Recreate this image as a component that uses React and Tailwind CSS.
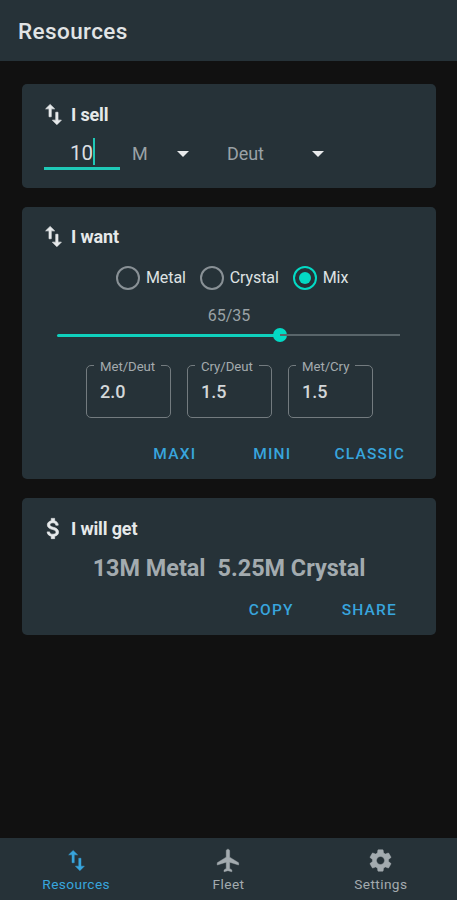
import { useState } from 'react'
import { MdSwapVert, MdAttachMoney, MdFlight, MdSettings } from 'react-icons/md'

const kinds = ['Metal', 'Crystal', 'Mix']

const tabs = [
  { name: 'Resources', Icon: MdSwapVert },
  { name: 'Fleet', Icon: MdFlight },
  { name: 'Settings', Icon: MdSettings },
]

function Card({ Icon, title, className, children }) {
  return (
    <section className={`rounded-[5px] bg-[#263238] ${className}`}>
      <h2 className="ml-[18px] flex h-[27px] items-center gap-[4px] text-[18px] font-bold tracking-[-0.15px] text-[#e6e9ea]">
        <Icon className="size-[27px] stroke-current stroke-[0.6] [&>path[fill=none]]:stroke-none" />
        {title}
      </h2>
      {children}
    </section>
  )
}

function Caret() {
  return (
    <svg viewBox="0 0 12 6" className="mt-[5px] h-[6px] w-[12px] fill-[#e8eaeb]">
      <path d="M0 0h12L6 6z" />
    </svg>
  )
}

function Rate({ label, value }) {
  return (
    <fieldset className="h-[60px] w-[85px] rounded-[5px] border-[1.5px] border-[#737b7f] pl-[7px]">
      <legend className="h-[14px] px-[6px] text-[13.2px] leading-[18px] tracking-[-0.05px] text-[#a4abae]">{label}</legend>
      <input defaultValue={value} className="mt-[7px] ml-[6px] block h-[24px] w-[56px] text-[18px] font-medium text-[#d3d7d9] outline-none" />
    </fieldset>
  )
}

export default function App() {
  const [kind, setKind] = useState('Mix')
  const [tab, setTab] = useState('Resources')
  const share = 65

  return (
    <div className="flex h-[900px] w-[457px] flex-col bg-[#111111] font-['Roboto',sans-serif]">
      <header className="flex h-[61px] items-center bg-[#263238] pt-[2px] pl-[18px]">
        <h1 className="text-[22.5px] font-medium tracking-[0.4px] text-[#e1e4e5]">Resources</h1>
      </header>

      <main className="flex flex-1 flex-col pt-[23px] pr-[21px] pl-[22px]">
        <Card Icon={MdSwapVert} title="I sell" className="h-[104px] pt-[17px]">
          <div className="mt-[4px] ml-[22px] flex h-[38px] items-center text-[18px] text-[#9aa2a6]">
            <div className="flex h-[38px] w-[76px] items-center border-b-[3px] border-[#1fc9b7] pt-[3px] pl-[26px] text-[20.5px] text-[#dcdfe1]">
              <span className="pt-[4px]">10</span>
              <span className="h-[27px] w-[2px] bg-[#1fc9b7]" />
            </div>
            <span className="ml-[12px] w-[45px] pt-[5px]">M</span>
            <Caret />
            <span className="ml-[38px] w-[85px] pt-[5px] tracking-[-0.1px]">Deut</span>
            <Caret />
          </div>
        </Card>

        <Card Icon={MdSwapVert} title="I want" className="mt-[19px] h-[272px] pt-[16px]">
          <div className="mt-[16px] ml-[94px] flex h-[24px] items-center gap-[14px]">
            {kinds.map((k) => (
              <button key={k} onClick={() => setKind(k)} className="flex items-center gap-[6px] text-[16px] tracking-[-0.1px] text-[#dfe2e3]">
                <span className={`flex size-[24px] items-center justify-center rounded-full border-[2.5px] ${k === kind ? 'border-[#03dac5]' : 'border-[#899196]'}`}>
                  {k === kind && <span className="size-[12px] rounded-full bg-[#03dac5]" />}
                </span>
                {k}
              </button>
            ))}
          </div>
          <p className="mt-[14px] text-center text-[16px] leading-[24px] text-[#9aa2a6]">{share}/{100 - share}</p>
          <div className="mr-[36px] ml-[35px] flex h-[14px] items-center">
            <div className="h-[3px] rounded-full bg-[#0fd0bd]" style={{ width: `${share}%` }} />
            <div className="-mx-[7px] size-[14px] shrink-0 rounded-full bg-[#03dac5]" />
            <div className="h-[2px] flex-1 bg-[#59656a]" />
          </div>
          <div className="mt-[16px] ml-[64px] flex gap-[16px]">
            <Rate label="Met/Deut" value="2.0" />
            <Rate label="Cry/Deut" value="1.5" />
            <Rate label="Met/Cry" value="1.5" />
          </div>
          <div className="mt-[24px] flex justify-end pr-[31px] text-[15.5px] leading-[24px] font-medium tracking-[1.2px] text-[#38a5dd]">
            <button>MAXI</button>
            <button className="ml-[57px]">MINI</button>
            <button className="ml-[43px]">CLASSIC</button>
          </div>
        </Card>

        <Card Icon={MdAttachMoney} title="I will get" className="mt-[19px] h-[137px] pt-[17px]">
          <p className="mt-[12px] flex justify-center gap-[12px] text-[23.4px] leading-[28px] font-bold text-[#a3abaf]">
            <span>13M Metal</span>
            <span>5.25M Crystal</span>
          </p>
          <div className="mt-[16px] flex justify-end pr-[39px] text-[15.5px] leading-[24px] font-medium tracking-[1.2px] text-[#38a5dd]">
            <button>COPY</button>
            <button className="ml-[48px]">SHARE</button>
          </div>
        </Card>
      </main>

      <nav className="flex h-[62px] bg-[#263238]">
        {tabs.map(({ name, Icon }) => (
          <button key={name} onClick={() => setTab(name)} className={`flex flex-1 flex-col items-center pt-[9px] text-[13.7px] leading-[20px] tracking-[0.4px] ${name === tab ? 'text-[#38a5dd]' : 'text-[#a3abaf]'}`}>
            <Icon className="size-[27px] stroke-current stroke-[0.4] [&>path[fill=none]]:stroke-none" />
            {name}
          </button>
        ))}
      </nav>
    </div>
  )
}
